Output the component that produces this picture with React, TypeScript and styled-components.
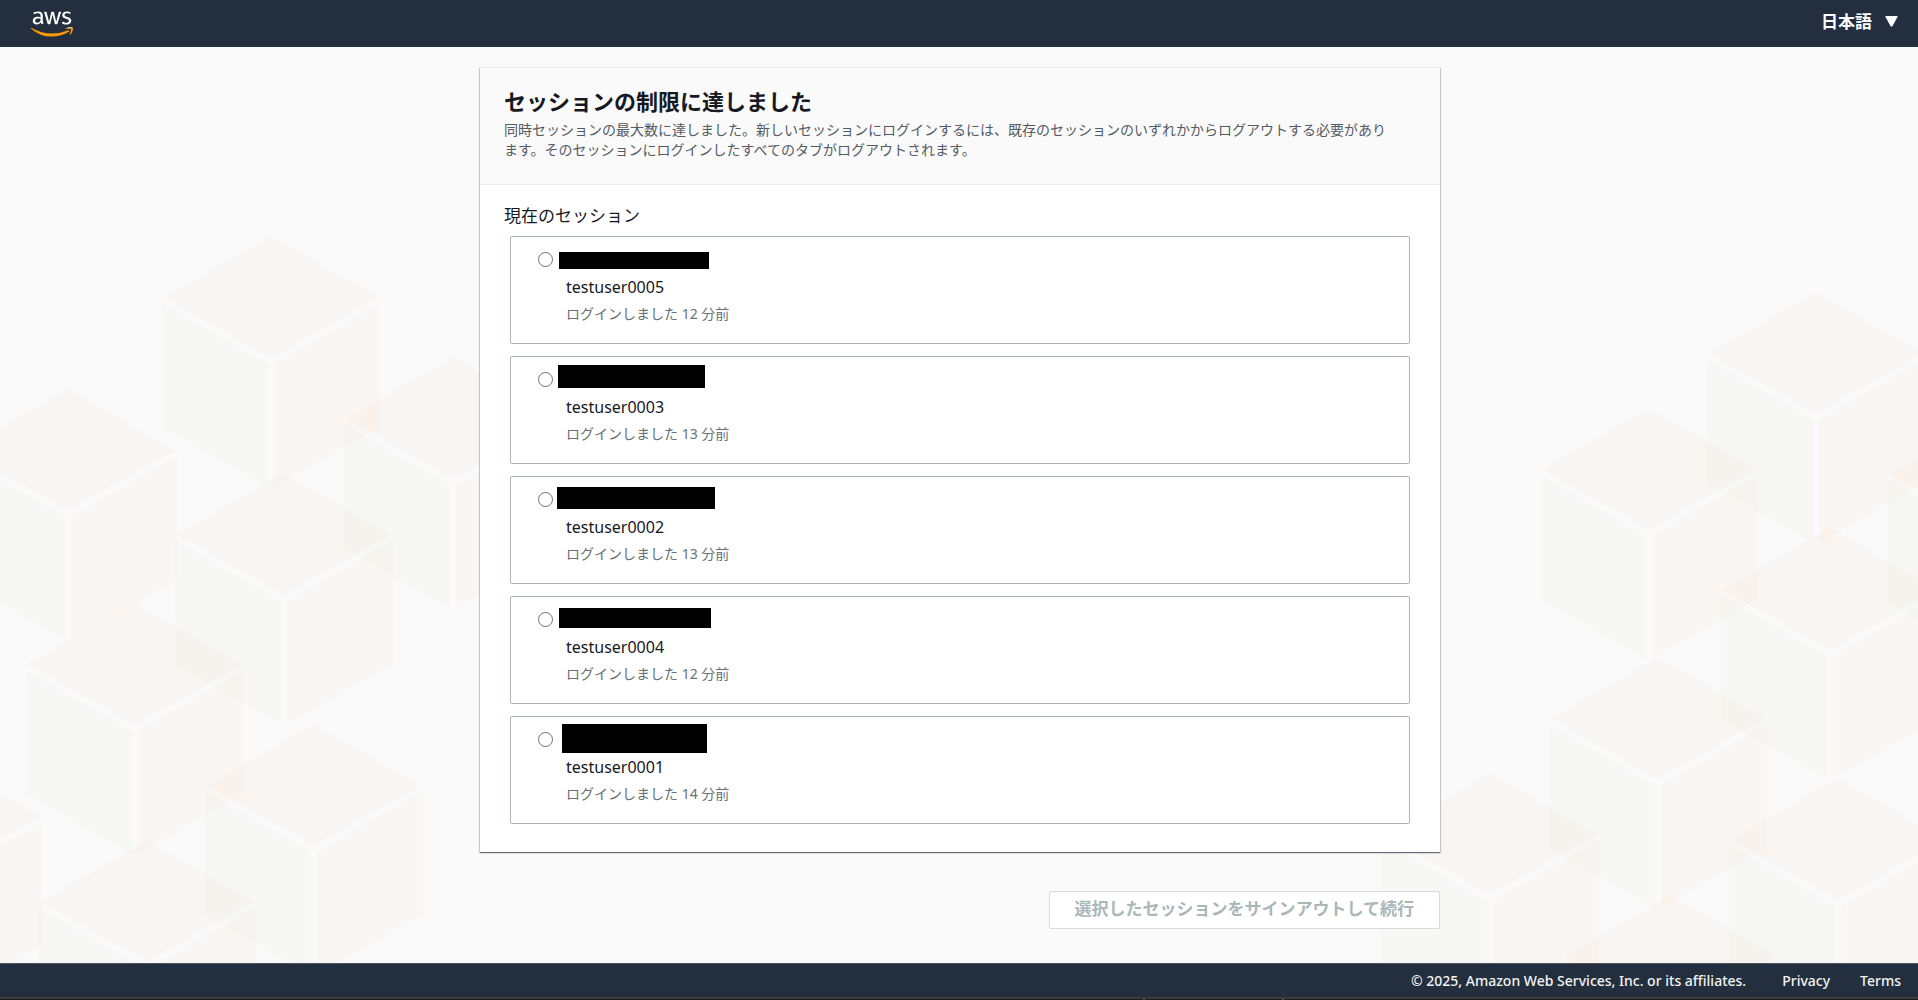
import React from "react";
import styled, { createGlobalStyle } from "styled-components";
import { FaAws } from "react-icons/fa";

const GlobalStyle = createGlobalStyle`
  *, *::before, *::after { box-sizing: border-box; }
  body {
    margin: 0;
    background: #fafafa;
    color: #16191f;
    font-family: "Noto Sans", "Noto Sans CJK JP", sans-serif;
  }
`;

const Page = styled.div`
  display: flex;
  flex-direction: column;
  min-height: 100vh;
`;

const TopBar = styled.header`
  display: flex;
  align-items: center;
  justify-content: space-between;
  height: 47px;
  padding: 0 20px 0 31px;
  background: #232f3e;
`;

const LogoLink = styled.a`
  display: flex;
`;

const LogoIcon = styled(FaAws)`
  width: 42px;
  height: 34px;

  path {
    fill: url(#logo-colors);
  }
`;

const LogoColors = styled.svg`
  position: absolute;
  width: 0;
  height: 0;
`;

const LanguageLabel = styled.label`
  display: flex;
  align-items: center;
  gap: 13px;
  padding-bottom: 4px;
`;

const LanguageSelect = styled.select`
  appearance: none;
  border: 0;
  padding: 0;
  background: transparent;
  color: #fff;
  font: 700 17px/24px "Noto Sans", "Noto Sans CJK JP", sans-serif;
  cursor: pointer;
`;

const Caret = styled.svg`
  width: 13px;
  height: 11px;
  fill: #fff;
`;

const Main = styled.main`
  position: relative;
  flex: 1;
  overflow: hidden;
  padding: 20px 24px 34px 26px;
`;

const CubeArt = styled.svg<{ $side: "left" | "right" }>`
  position: absolute;
  bottom: 0;
  ${(p) => p.$side}: 0;
  width: 580px;
  height: 915px;
`;

const Content = styled.div`
  position: relative;
  display: flex;
  flex-direction: column;
  gap: 39px;
  max-width: 960px;
  margin: 0 auto;
`;

const Card = styled.section`
  background: #fff;
  border-top: 1px solid #eaeded;
  box-shadow: 0 1px 1px 0 rgba(0, 28, 36, 0.45), 1px 1px 1px 0 rgba(0, 28, 36, 0.15),
    -1px 1px 1px 0 rgba(0, 28, 36, 0.15);
`;

const CardHeader = styled.div`
  padding: 16px 48px 24px 24px;
  background: #fafafa;
  border-bottom: 1px solid #eaeded;
`;

const Title = styled.h1`
  margin: 0 0 2px;
  font-size: 22px;
  line-height: 34px;
  font-weight: 700;
`;

const Description = styled.p`
  margin: 0;
  color: #545b64;
  font-size: 14px;
  line-height: 20px;
`;

const SessionGroup = styled.fieldset`
  margin: 0;
  border: 0;
  padding: 19px 30px 28px;
  min-width: 0;
`;

const GroupTitle = styled.legend`
  float: left;
  width: 100%;
  margin: 0 -6px;
  padding: 0;
  font-size: 17px;
  line-height: 24px;
`;

const SessionList = styled.div`
  clear: both;
  display: flex;
  flex-direction: column;
  gap: 12px;
  padding-top: 8px;
`;

const SessionCard = styled.label`
  position: relative;
  display: flex;
  gap: 13px;
  height: 108px;
  padding: 15px 27px;
  border: 1px solid #aab7b8;
  border-radius: 2px;
  background: #fff;
`;

const Radio = styled.input`
  appearance: none;
  flex: none;
  width: 15px;
  height: 15px;
  margin: 0;
  border: 1px solid #687078;
  border-radius: 50%;
  background: #fff;

  &:checked {
    border: 5px solid #0073bb;
  }
`;

const SessionText = styled.span`
  display: flex;
  flex-direction: column;
  gap: 3px;
  padding-top: 23px;
`;

const UserName = styled.span`
  font-size: 16px;
  line-height: 24px;
`;

const LoginTime = styled.span`
  color: #687078;
  font-size: 14px;
  line-height: 24px;
`;

/* Solid bar laid over the account name of a session. */
const Redaction = styled.span<{ $x: number; $y: number; $w: number; $h: number }>`
  position: absolute;
  left: ${(p) => p.$x}px;
  top: ${(p) => p.$y}px;
  width: ${(p) => p.$w}px;
  height: ${(p) => p.$h}px;
  background: #000;
`;

const SubmitButton = styled.button`
  align-self: flex-end;
  height: 38px;
  padding: 0 25px 2px;
  border: 1px solid #d5dbdb;
  border-radius: 2px;
  background: #fff;
  color: #aab7b8;
  font: 700 17px/24px "Noto Sans", "Noto Sans CJK JP", sans-serif;
`;

const Footer = styled.footer`
  display: flex;
  align-items: center;
  justify-content: flex-end;
  gap: 36px;
  height: 34px;
  padding: 0 17px 0 24px;
  border-top: 1px solid #4d5762;
  background: #232f3e;
  color: #f2f3f3;
  font-family: "Noto Sans", sans-serif;
  font-size: 14px;
  font-weight: 500;
  line-height: 20px;
`;

const FooterLinks = styled.nav`
  display: flex;
  gap: 30px;
`;

const FooterLink = styled.a`
  color: inherit;
  text-decoration: none;
`;

const BottomStrip = styled.div`
  display: flex;
  justify-content: center;
  height: 4px;
  padding-left: 509px;
  border-top: 2px solid #3c3c3c;
  background: #1b1b1b;
`;

const StripSegment = styled.span`
  width: 141px;
  border: solid #5a5a5a;
  border-width: 0 2px;
`;

type Point = [number, number];

const LEFT_CUBES: Point[] = [
  [271, 188],
  [68, 341],
  [453, 309],
  [284, 425],
  [135, 555],
  [314, 676],
  [147, 792],
  [-67, 707],
];

const RIGHT_CUBES: Point[] = [
  [478, 244],
  [311, 360],
  [492, 480],
  [659, 364],
  [320, 609],
  [152, 725],
  [500, 730],
  [333, 847],
];

/* One isometric cube; the point is the apex of its top face. */
function Cube({ at: [x, y] }: { at: Point }) {
  return (
    <g transform={`translate(${x} ${y})`}>
      <path d="M0 0 107 61.500 0 122-107 61.500Z" fill="rgb(215,120,40)" fillOpacity="0.035" />
      <path d="M-109 67-3 128V251L-109 191Z" fill="rgb(160,135,90)" fillOpacity="0.027" />
      <path d="M109 67 3 128V251L109 191Z" fill="rgb(250,145,80)" fillOpacity="0.038" />
    </g>
  );
}

function Cubes({ side, cubes }: { side: "left" | "right"; cubes: Point[] }) {
  return (
    <CubeArt $side={side} viewBox="0 0 580 915" aria-hidden="true">
      {cubes.map((c) => (
        <Cube key={c.join()} at={c} />
      ))}
    </CubeArt>
  );
}

const SESSIONS = [
  { user: "testuser0005", minutes: 12, bar: { $x: 48, $y: 15, $w: 150, $h: 17 } },
  { user: "testuser0003", minutes: 13, bar: { $x: 47, $y: 8, $w: 147, $h: 23 } },
  { user: "testuser0002", minutes: 13, bar: { $x: 46, $y: 10, $w: 158, $h: 22 } },
  { user: "testuser0004", minutes: 12, bar: { $x: 48, $y: 11, $w: 152, $h: 20 } },
  { user: "testuser0001", minutes: 14, bar: { $x: 51, $y: 7, $w: 145, $h: 29 } },
];

export default function App() {
  const [selected, setSelected] = React.useState<string | null>(null);

  return (
    <Page>
      <GlobalStyle />
      <TopBar>
        <LogoColors aria-hidden="true">
          <defs>
            <linearGradient id="logo-colors" gradientUnits="userSpaceOnUse" x1="0" y1="0" x2="0" y2="512">
              <stop offset="0.62" stopColor="#fff" />
              <stop offset="0.62" stopColor="#f90" />
            </linearGradient>
          </defs>
        </LogoColors>
        <LogoLink href="#" aria-label="AWS">
          <LogoIcon />
        </LogoLink>
        <LanguageLabel>
          <LanguageSelect aria-label="言語" defaultValue="ja">
            <option value="ja">日本語</option>
          </LanguageSelect>
          <Caret viewBox="0 0 13 11" aria-hidden="true">
            <path d="M1 0H12Q13 0 12.500 1L7.500 10Q6.500 11.500 5.500 10L.5 1Q0 0 1 0Z" />
          </Caret>
        </LanguageLabel>
      </TopBar>

      <Main>
        <Cubes side="left" cubes={LEFT_CUBES} />
        <Cubes side="right" cubes={RIGHT_CUBES} />
        <Content>
          <Card>
            <CardHeader>
              <Title>セッションの制限に達しました</Title>
              <Description>
                同時セッションの最大数に達しました。新しいセッションにログインするには、既存のセッションのいずれかからログアウトする必要があります。そのセッションにログインしたすべてのタブがログアウトされます。
              </Description>
            </CardHeader>
            <SessionGroup>
              <GroupTitle>現在のセッション</GroupTitle>
              <SessionList>
                {SESSIONS.map((s) => (
                  <SessionCard key={s.user}>
                    <Radio
                      type="radio"
                      name="session"
                      value={s.user}
                      checked={selected === s.user}
                      onChange={() => setSelected(s.user)}
                    />
                    <Redaction {...s.bar} />
                    <SessionText>
                      <UserName>{s.user}</UserName>
                      <LoginTime>ログインしました {s.minutes} 分前</LoginTime>
                    </SessionText>
                  </SessionCard>
                ))}
              </SessionList>
            </SessionGroup>
          </Card>
          <SubmitButton type="button" disabled={!selected}>
            選択したセッションをサインアウトして続行
          </SubmitButton>
        </Content>
      </Main>

      <Footer>
        <span>© 2025, Amazon Web Services, Inc. or its affiliates.</span>
        <FooterLinks>
          <FooterLink href="#privacy">Privacy</FooterLink>
          <FooterLink href="#terms">Terms</FooterLink>
        </FooterLinks>
      </Footer>
      <BottomStrip>
        <StripSegment />
      </BottomStrip>
    </Page>
  );
}
